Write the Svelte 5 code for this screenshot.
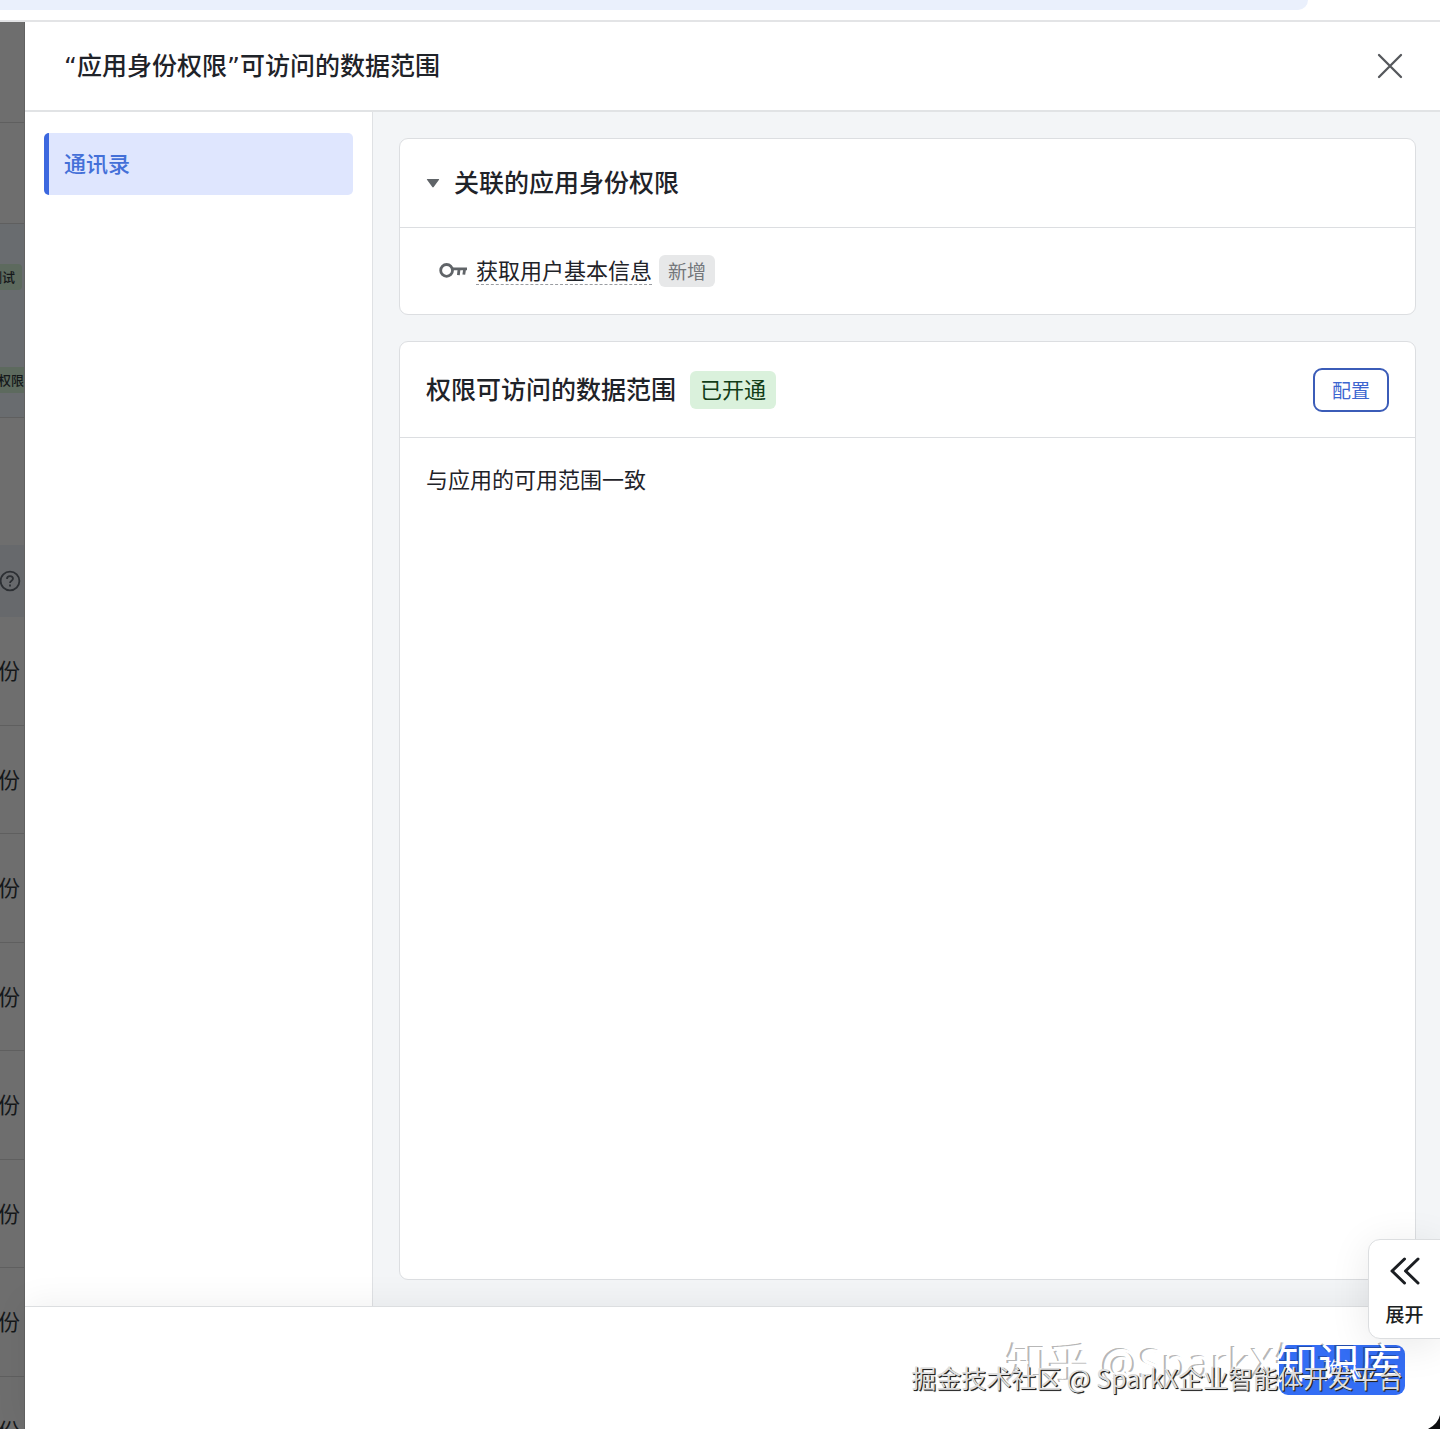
<script>
  const rows = Array.from({ length: 8 }, (_, i) => i);
</script>

<div class="page">
  <div class="browser-bar"><div class="omnibox"></div></div>
  <div class="stage">
    <div class="behind" aria-hidden="true">
      <div class="cell top"></div>
      <div class="cell head"></div>
      <div class="cell tags">
        <span class="tag first">测试</span>
        <span class="tag second">权限变更</span>
      </div>
      <div class="cell space"></div>
      <div class="cell help">
        <svg width="22" height="22" viewBox="0 0 22 22" fill="none" stroke="#2c2f33" stroke-width="1.8">
          <circle cx="11" cy="11" r="9.4" />
          <path d="M8 9c0-1.8 1.3-2.8 3-2.8s3 1 3 2.6c0 1.9-3 2-3 4.1" />
          <path d="M11 14.6v2" />
        </svg>
      </div>
      <div class="rows">
        {#each rows as r (r)}
          <div class="cell row">份</div>
        {/each}
      </div>
    </div>

    <section class="drawer" aria-labelledby="drawer-title">
      <header class="drawer-head">
        <h1 id="drawer-title">“应用身份权限”可访问的数据范围</h1>
        <button class="close" aria-label="关闭">
          <svg width="28" height="28" viewBox="0 0 28 28" fill="none" stroke="#55585c" stroke-width="2.3" stroke-linecap="round">
            <path d="M3 3l22 22M25 3L3 25" />
          </svg>
        </button>
      </header>

      <div class="drawer-body">
        <nav class="side">
          <a href="#contacts" class="side-item">通讯录</a>
        </nav>
        <main class="content">
          <section class="card">
            <div class="card-head compact">
              <button class="fold" aria-label="收起">
                <svg width="14" height="10" viewBox="0 0 14 10"><path d="M1.4 1h11.2q1 0 .4.8L7.7 9q-.7.8-1.4 0L1 1.8Q.4 1 1.4 1z" fill="#606468" /></svg>
              </button>
              <h2>关联的应用身份权限</h2>
            </div>
            <div class="perm">
              <svg width="28" height="18" viewBox="0 0 28 18" fill="none" stroke="#606468" stroke-width="2.8">
                <circle cx="7.6" cy="8.4" r="5.9" />
                <path d="M13.3 6.8H28M20 7.4l-.6 5.8M25.6 7.4l-.8 5.2" />
              </svg>
              <a href="#permission" class="perm-name">获取用户基本信息</a>
              <span class="badge">新增</span>
            </div>
          </section>

          <section class="card grow">
            <div class="card-head">
              <h2>权限可访问的数据范围</h2>
              <span class="status">已开通</span>
              <button class="config">配置</button>
            </div>
            <p class="scope">与应用的可用范围一致</p>
          </section>
        </main>
      </div>

      <footer class="drawer-foot">
        <button class="confirm">确认</button>
      </footer>
    </section>
  </div>

  <button class="expand">
    <svg width="32" height="30" viewBox="0 0 32 30" fill="none" stroke="#1b1e22" stroke-width="3" stroke-linecap="round" stroke-linejoin="round">
      <path d="M15.5 3L3 15l12.5 12M29 3L16.5 15 29 27" />
    </svg>
    展开
  </button>
  <svg class="corner" width="12" height="14" viewBox="0 0 12 14"><path d="M12 0Q10 9 0 14H12z" fill="#0b0c0e" /></svg>
  <div class="mark zhihu">知乎 @SparkX知识库</div>
  <div class="mark juejin">掘金技术社区 @ SparkX企业智能体开发平台</div>
</div>

<style>
  :global(body) {
    margin: 0;
  }
  .page,
  .page * {
    box-sizing: border-box;
  }
  .page {
    position: relative;
    height: 100vh;
    display: flex;
    flex-direction: column;
    overflow: hidden;
    background: #fff;
    color: #1f2329;
    font-family: Inter, "Noto Sans CJK SC", sans-serif;
    font-size: 22px;
    line-height: 32px;
  }
  button {
    font: inherit;
    margin: 0;
    padding: 0;
    border: 0;
    background: none;
    cursor: pointer;
  }
  h1,
  h2 {
    margin: 0;
    font-size: 25px;
    font-weight: 500;
    line-height: 36px;
    white-space: nowrap;
  }
  h1 {
    font-family: "DejaVu Sans", "Noto Sans CJK SC", sans-serif;
    padding-top: 2px;
  }
  .browser-bar {
    height: 22px;
    flex: none;
    padding-right: 132px;
    border-bottom: 2px solid #e3e4e6;
  }
  .omnibox {
    height: 10px;
    background: #eaf0fc;
    border-radius: 0 0 20px 0;
  }
  .stage {
    flex: 1;
    display: flex;
    min-height: 0;
  }
  .behind {
    width: 25px;
    flex: none;
    overflow: hidden;
    background: #6e6e6e;
    border-right: 1px solid #626262;
    color: #15181a;
  }
  .cell {
    border-bottom: 1px solid #5f5f5f;
  }
  .top,
  .head {
    height: 101px;
  }
  .tags {
    height: 194px;
    padding-top: 40px;
    background: #696c6f;
    display: flex;
    flex-direction: column;
    gap: 77px;
    font-size: 13px;
    font-weight: 500;
    line-height: 26px;
  }
  .tag {
    display: flex;
    white-space: nowrap;
    background: #5d6a5e;
  }
  .first {
    justify-content: flex-end;
    width: 22px;
    padding-right: 7px;
    border-radius: 0 4px 4px 0;
  }
  .second {
    margin-left: -2px;
  }
  .space {
    height: 127px;
    border: 0;
  }
  .help {
    height: 72px;
    background: #67696c;
    border: 0;
    display: flex;
    align-items: center;
  }
  .help svg {
    flex: none;
    margin-left: -1px;
  }
  .rows {
    margin-left: -2px;
  }
  .row {
    height: 109px;
    display: flex;
    align-items: center;
  }
  .row:nth-child(even) {
    height: 108px;
  }
  .drawer {
    flex: 1;
    min-width: 0;
    display: flex;
    flex-direction: column;
    background: #fff;
  }
  .drawer-head {
    flex: none;
    display: flex;
    align-items: center;
    justify-content: space-between;
    height: 90px;
    padding: 0 36px 0 39px;
    border-bottom: 2px solid #e1e3e5;
  }
  .close {
    display: flex;
  }
  .drawer-body {
    flex: 1;
    min-height: 0;
    display: flex;
  }
  .side {
    width: 348px;
    flex: none;
    padding: 21px 19px;
    border-right: 1px solid #dfe1e4;
  }
  .side-item {
    display: block;
    padding: 15px;
    border-left: 5px solid #3c68df;
    border-radius: 5px;
    background: #dfe6fe;
    color: #4470d8;
    text-decoration: none;
    font-weight: 500;
  }
  .content {
    flex: 1;
    min-width: 0;
    display: flex;
    flex-direction: column;
    gap: 26px;
    padding: 26px 24px 26px 26px;
    background: #f3f5f7;
  }
  .card {
    background: #fff;
    border: 1px solid #dcdee1;
    border-radius: 9px;
  }
  .grow {
    flex: 1;
  }
  .card-head {
    display: flex;
    align-items: center;
    height: 96px;
    padding: 0 26px;
    border-bottom: 1px solid #dcdee1;
  }
  .compact {
    height: 89px;
  }
  .fold {
    display: flex;
    margin-right: 14px;
  }
  .perm {
    display: flex;
    align-items: center;
    height: 86px;
    padding-left: 39px;
  }
  .perm-name {
    margin: 0 7px 0 9px;
    line-height: 26px;
    color: inherit;
    text-decoration: none;
    border-bottom: 1px dashed #9a9da2;
  }
  .badge,
  .config {
    font-family: "Noto Sans CJK SC", sans-serif;
    font-size: 19px;
  }
  .badge {
    padding: 0 9px;
    border-radius: 6px;
    background: #e7e8e9;
    color: #74777b;
  }
  .status {
    margin-left: 14px;
    padding: 3px 10px;
    border-radius: 6px;
    background: #daf1dc;
    color: #123d17;
  }
  .config {
    margin-left: auto;
    height: 44px;
    width: 76px;
    border: 2px solid #3b5cb8;
    border-radius: 9px;
    background: #fff;
    color: #3d66d0;
  }
  .scope {
    margin: 0;
    padding: 26px;
  }
  .drawer-foot {
    position: relative;
    flex: none;
    display: flex;
    justify-content: flex-end;
    height: 123px;
    padding: 38px 35px 0;
    border-top: 1px solid #dcdee0;
    background: #fff;
    box-shadow: 0 -4px 32px rgba(0, 0, 0, 0.06);
  }
  .confirm {
    width: 126px;
    height: 50px;
    border-radius: 9px;
    background: #336df4;
    color: #fff;
    font-size: 19px;
  }
  .expand {
    position: absolute;
    right: -1px;
    bottom: 90px;
    width: 73px;
    height: 100px;
    padding-top: 8px;
    display: flex;
    flex-direction: column;
    align-items: center;
    justify-content: center;
    gap: 16px;
    border: 1px solid #dcdee0;
    border-radius: 12px 0 0 12px;
    background: #fff;
    box-shadow: 0 6px 40px rgba(0, 0, 0, 0.09);
    color: #1b1e22;
    font-size: 19px;
    font-weight: 500;
    line-height: 28px;
  }
  .corner {
    position: absolute;
    right: 0;
    bottom: 0;
  }
  .mark {
    position: absolute;
    white-space: nowrap;
    pointer-events: none;
  }
  .zhihu {
    right: 38px;
    bottom: 38px;
    font-family: "Noto Sans", "Noto Sans CJK SC", sans-serif;
    font-size: 42px;
    line-height: 56px;
    color: #fff;
    text-shadow: -2px -1px 0 rgba(0, 0, 0, 0.3);
  }
  .juejin {
    right: 37px;
    bottom: 36px;
    font-family: "Noto Sans CJK SC", sans-serif;
    font-size: 25px;
    color: #dedede;
    text-shadow: 1px 1px 0 #222, 1px 1px 1px #444;
  }
</style>
